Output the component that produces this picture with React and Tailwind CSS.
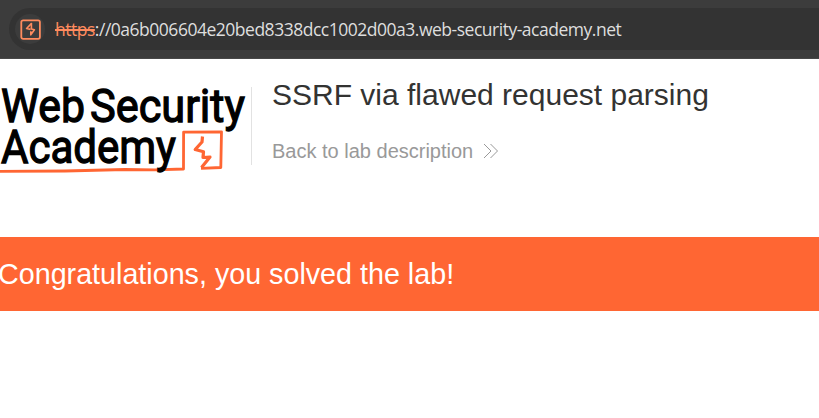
function BurpIcon() {
  return (
    <svg width="22" height="22" viewBox="0 0 22 22" fill="none" stroke="#ff8b5e" className="ml-px mt-px">
      <rect x="1.3" y="1.3" width="18.6" height="18.6" rx="1.8" strokeWidth="1.8" />
      <path d="M11.8 4.2 6.6 9.5 10.6 10.4" strokeWidth="1.7" strokeLinejoin="round" />
      <path d="M11.4 4.6V10L14.4 10.8 10.8 15.8V12.3" strokeWidth="1.6" strokeLinejoin="round" />
    </svg>
  );
}

function AddressBar() {
  return (
    <div className="flex h-[59px] border-b border-[#484848] bg-[#3c3c3c] pt-2 pl-[9px]">
      <div className="flex h-[42px] flex-1 items-center rounded-l-full bg-[#333333] pl-[6px]">
        <div className="flex size-[30px] items-center justify-center rounded-full bg-[#3c3c3c]">
          <BurpIcon />
        </div>
        <div className="ml-[10px] whitespace-nowrap font-['Open_Sans','Noto_Sans',sans-serif] text-[17.5px] leading-[24px] tracking-[-0.485px] text-[#dedede]">
          <span className="text-[#ff8b5e] line-through decoration-2">https</span>
          ://0a6b006604e20bed8338dcc1002d00a3.web-security-academy.net
        </div>
      </div>
    </div>
  );
}

function Logo() {
  return (
    <svg width="251" height="96" viewBox="0 80 251 96" className="block shrink-0">
      <g fill="none" stroke="#ff6633" strokeLinejoin="round">
        <path d="M0 171.3 65 171 125 169.5 155 169.8 183.5 169 183.6 132.2 221.5 131.8 220.8 167.5 201 168.3" strokeWidth="2.8" />
        <path d="M202.5 136.5 202 142 195.2 149.5 203.5 151.8 203 157.5 210 157 201.5 167.5" strokeWidth="3.2" />
      </g>
      <g fill="#000" stroke="#000" strokeWidth="1.3" fontFamily="Roboto, sans-serif" fontWeight="400" fontSize="47">
        <text x="1" y="122.2" textLength="84" lengthAdjust="spacingAndGlyphs">Web</text>
        <text x="90" y="122.2" textLength="155" lengthAdjust="spacingAndGlyphs">Security</text>
        <text x="1" y="163" textLength="175" lengthAdjust="spacingAndGlyphs">Academy</text>
      </g>
    </svg>
  );
}

export default function App() {
  return (
    <div className="h-[418px] w-[819px] overflow-hidden bg-white font-['Liberation_Sans',Arial,sans-serif]">
      <AddressBar />
      <header className="flex h-[178px] pt-[21px]">
        <Logo />
        <div className="mt-[7px] h-[78px] w-px bg-[#e2e2e2]" />
        <div className="ml-[20px] whitespace-nowrap">
          <h1 className="-mt-[2px] text-[30px] leading-[34px] text-[#333332]">SSRF via flawed request parsing</h1>
          <a className="mt-[27px] flex items-center text-[20px] leading-6 text-[#999999]">
            Back to lab description
            <svg className="ml-[10px]" width="16" height="16" viewBox="0 0 16 16" fill="none" stroke="#999999">
              <path d="M1 1 8 8 1 15M7.5 1 14.5 8 7.5 15" />
            </svg>
          </a>
        </div>
      </header>
      <section className="flex h-[74px] items-center bg-[#ff6633]">
        <p className="-ml-[2px] whitespace-nowrap text-[28.7px] leading-[34px] text-white">Congratulations, you solved the lab!</p>
      </section>
    </div>
  );
}
